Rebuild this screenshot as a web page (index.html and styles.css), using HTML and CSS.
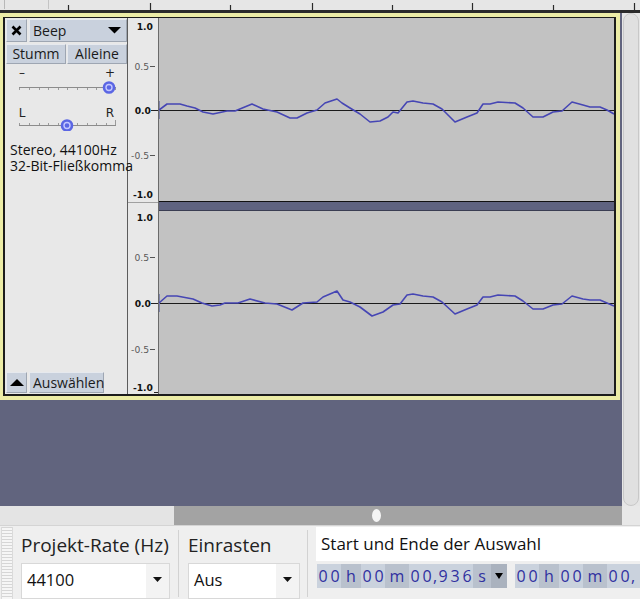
FILE: index.html
```html
<!DOCTYPE html>
<html>
<head>
<meta charset="utf-8">
<link rel="stylesheet" href="styles.css">
</head>
<body>
<div class="app">
  <div class="hruler">
    <svg width="640" height="10" viewBox="0 0 640 10">
      <line x1="4.5" y1="0" x2="4.5" y2="9" stroke="#b8b8b8"/>
      <line x1="48.5" y1="0" x2="48.5" y2="9" stroke="#c4c4c4"/>
      <g stroke="#2a2a2a" stroke-width="1.2">
        <line x1="68.5" y1="5" x2="68.5" y2="10"/>
        <line x1="150.5" y1="3" x2="150.5" y2="10"/>
        <line x1="230.5" y1="5" x2="230.5" y2="10"/>
        <line x1="312.5" y1="3" x2="312.5" y2="10"/>
        <line x1="392.5" y1="5" x2="392.5" y2="10"/>
        <line x1="472.5" y1="3" x2="472.5" y2="10"/>
        <line x1="553.5" y1="5" x2="553.5" y2="10"/>
        <line x1="634.5" y1="3" x2="634.5" y2="10"/>
      </g>
    </svg>
  </div>

  <div class="middle">
    <div class="canvas">
      <div class="track">
        <div class="track-inner">
          <div class="ctrl">
            <div class="row1">
              <div class="btn close">
                <svg width="19" height="21" viewBox="0 0 19 21"><path d="M5.5 6.5 L13.5 14.5 M13.5 6.5 L5.5 14.5" stroke="#000" stroke-width="2.6" fill="none"/></svg>
              </div>
              <div class="btn name"><span>Beep</span>
                <svg class="tri" width="14" height="7" viewBox="0 0 14 7"><path d="M0 0 H13 L6.5 6.5 Z" fill="#000"/></svg>
              </div>
            </div>
            <div class="row2">
              <div class="btn half">Stumm</div>
              <div class="btn half">Alleine</div>
            </div>
            <svg class="slider s1" width="122" height="32" viewBox="0 0 122 32">
              <text x="17" y="13" class="sl-lab">–</text>
              <text x="105" y="13" class="sl-lab">+</text>
              <line x1="14" y1="23.5" x2="111" y2="23.5" stroke="#8c8c8c"/>
              <g stroke="#9a9a9a">
                <line x1="14.5" y1="24" x2="14.5" y2="26"/><line x1="24.5" y1="24" x2="24.5" y2="26"/><line x1="34.5" y1="24" x2="34.5" y2="26"/><line x1="43.5" y1="24" x2="43.5" y2="26"/><line x1="53.5" y1="24" x2="53.5" y2="26"/><line x1="62.5" y1="24" x2="62.5" y2="26"/><line x1="72.5" y1="24" x2="72.5" y2="26"/><line x1="82.5" y1="24" x2="82.5" y2="26"/><line x1="91.5" y1="24" x2="91.5" y2="26"/><line x1="101.5" y1="24" x2="101.5" y2="26"/><line x1="110.5" y1="24" x2="110.5" y2="26"/>
              </g>
              <circle cx="104" cy="23.5" r="6.3" fill="#5b66e4"/>
              <circle cx="104" cy="23.5" r="3" fill="#5b66e4" stroke="#c4c8ff" stroke-width="1.4"/>
            </svg>
            <svg class="slider s2" width="122" height="35" viewBox="0 0 122 35">
              <text x="17" y="21" class="sl-lab">L</text>
              <text x="105" y="21" class="sl-lab">R</text>
              <line x1="14" y1="29.5" x2="111" y2="29.5" stroke="#8c8c8c"/>
              <g stroke="#9a9a9a">
                <line x1="14.5" y1="27" x2="14.5" y2="29"/><line x1="24.5" y1="27" x2="24.5" y2="29"/><line x1="34.5" y1="27" x2="34.5" y2="29"/><line x1="43.5" y1="27" x2="43.5" y2="29"/><line x1="53.5" y1="27" x2="53.5" y2="29"/><line x1="72.5" y1="27" x2="72.5" y2="29"/><line x1="82.5" y1="27" x2="82.5" y2="29"/><line x1="91.5" y1="27" x2="91.5" y2="29"/><line x1="101.5" y1="27" x2="101.5" y2="29"/><line x1="110.5" y1="24" x2="110.5" y2="29"/>
              </g>
              <circle cx="62" cy="29.5" r="6.3" fill="#5b66e4"/>
              <circle cx="62" cy="29.5" r="3" fill="#5b66e4" stroke="#c4c8ff" stroke-width="1.4"/>
            </svg>
            <div class="info">
              <div class="info-line">Stereo, 44100Hz</div>
              <div class="info-line">32-Bit-Fließkomma</div>
            </div>
            <div class="spacer"></div>
            <div class="row3">
              <div class="btn up">
                <svg width="14" height="7" viewBox="0 0 14 7"><path d="M0 7 H14 L7 0 Z" fill="#000"/></svg>
              </div>
              <div class="btn select">Auswählen</div>
            </div>
          </div>

          <div class="vruler">
            <svg width="30" height="183" viewBox="0 0 30 183">
              <text x="25" y="11.5" class="rb">1.0</text>
              <text x="21" y="51.5" class="rn">0.5</text>
              <line x1="22" y1="48.5" x2="27" y2="48.5" stroke="#555"/>
              <text x="23" y="95.5" class="rb">0.0</text>
              <line x1="23" y1="92.5" x2="30" y2="92.5" stroke="#222"/>
              <text x="21" y="140.5" class="rn">-0.5</text>
              <line x1="22" y1="137.5" x2="27" y2="137.5" stroke="#555"/>
              <text x="25" y="179.5" class="rb">-1.0</text>
            </svg>
            <div class="vr-sep"></div>
            <svg width="30" height="183" viewBox="0 0 30 183">
              <text x="25" y="9.5" class="rb">1.0</text>
              <text x="21" y="49.5" class="rn">0.5</text>
              <line x1="22" y1="46.5" x2="27" y2="46.5" stroke="#555"/>
              <text x="23" y="95.5" class="rb">0.0</text>
              <line x1="23" y1="92.5" x2="30" y2="92.5" stroke="#222"/>
              <text x="21" y="141.5" class="rn">-0.5</text>
              <line x1="22" y1="138.5" x2="27" y2="138.5" stroke="#555"/>
              <text x="25" y="179.5" class="rb">-1.0</text>
              <line x1="26" y1="181.5" x2="30" y2="181.5" stroke="#222"/>
            </svg>
          </div>

          <div class="wave">
            <svg width="455" height="183" viewBox="0 0 455 183">
              <line x1="0" y1="92.5" x2="455" y2="92.5" stroke="#1a1a1a"/>
              <line x1="0.5" y1="83" x2="0.5" y2="101" stroke="#7f84a8"/>
              <polyline fill="none" stroke="#4646b4" stroke-width="1.6" stroke-linejoin="round" points="0,92 8,86 21,86 28,88 36,90 44,94 54,96 68,93 76,93 93,86 104,91 118,94 131,100 138,100 148,95 158,92 166,85 178,81 183,85 191,90 201,96 211,104 221,103 229,99 234,94 239,95 248,84 254,83 264,85 274,86 283,91 296,104 308,99 318,95 324,86 331,86 339,84 356,85 364,90 374,99 384,99 394,94 403,93 413,84 424,87 431,89 441,89 448,92 455,96"/>
            </svg>
            <div class="wave-sep"></div>
            <svg width="455" height="183" viewBox="0 0 455 183">
              <line x1="0" y1="92.5" x2="455" y2="92.5" stroke="#1a1a1a"/>
              <line x1="0.5" y1="83" x2="0.5" y2="101" stroke="#7f84a8"/>
              <polyline fill="none" stroke="#4646b4" stroke-width="1.6" stroke-linejoin="round" points="0,92 8,85 18,85 34,88 43,92 53,95 61,94 66,92 79,92 91,88 106,92 118,93 133,99 144,92 158,91 164,86 178,80 184,89 191,91 201,96 213,105 224,101 234,94 241,93 248,84 254,83 264,85 274,86 283,91 296,103 308,98 318,94 324,86 331,86 339,84 356,85 364,90 374,98 384,98 394,94 403,93 413,85 424,88 431,89 441,89 448,92 455,95"/>
            </svg>
          </div>
        </div>
      </div>
    </div>
    <div class="vscroll"><div class="vthumb"></div></div>
  </div>

  <div class="hscroll">
    <div class="hs-left"></div>
    <div class="hs-thumb"><div class="oval"></div></div>
    <div class="hs-corner"></div>
  </div>

  <div class="toolbar">
    <div class="grip"></div>
    <div class="sec sec1">
      <div class="lab">Projekt-Rate (Hz)</div>
      <div class="combo"><span class="val">44100</span><span class="drop"><svg width="9" height="5" viewBox="0 0 9 5"><path d="M0 0 H9 L4.5 5 Z" fill="#111"/></svg></span></div>
    </div>
    <div class="sep"></div>
    <div class="sec sec2">
      <div class="lab">Einrasten</div>
      <div class="combo"><span class="val">Aus</span><span class="drop"><svg width="9" height="5" viewBox="0 0 9 5"><path d="M0 0 H9 L4.5 5 Z" fill="#111"/></svg></span></div>
    </div>
    <div class="sep"></div>
    <div class="sec sec3">
      <div class="selbox">Start und Ende der Auswahl</div>
      <div class="times">
        <div class="time">
          <span class="d">0</span><span class="d">0</span><span class="u uh">h</span><span class="d">0</span><span class="d">0</span><span class="u um">m</span><span class="d">0</span><span class="d">0</span><span class="u uc">,</span><span class="d">9</span><span class="d">3</span><span class="d">6</span><span class="u us">s</span><span class="arr"><svg width="8" height="6" viewBox="0 0 8 6"><path d="M0 0 H8 L4 6 Z" fill="#000"/></svg></span>
        </div>
        <div class="time time2">
          <span class="d">0</span><span class="d">0</span><span class="u uh">h</span><span class="d">0</span><span class="d">0</span><span class="u um">m</span><span class="d">0</span><span class="d">0</span><span class="u uc">,</span><span class="d"></span>
        </div>
      </div>
    </div>
  </div>
</div>
</body>
</html>
```

FILE: styles.css
```css
* { box-sizing: border-box; }

body {
  margin: 0;
  width: 640px;
  height: 599px;
  overflow: hidden;
  font-family: "Open Sans", "Noto Sans", sans-serif;
  background: #efefef;
  color: #1a1a1a;
}

svg { display: block; }

.app {
  display: flex;
  flex-direction: column;
  width: 640px;
  height: 599px;
}

.hruler {
  height: 13px;
  flex: none;
  background: #e6e6e6;
  border-bottom: 3px solid #2b2b2b;
}

.middle {
  display: flex;
  height: 493px;
  flex: none;
}

.canvas {
  width: 622px;
  background: #61647e;
}

.track {
  width: 620px;
  border: 4px solid #ececa6;
  border-left-width: 3px;
}

.track-inner {
  display: flex;
  height: 379px;
  border: 2px solid #1c1c1c;
  border-top-width: 1px;
}

.ctrl {
  width: 123px;
  flex: none;
  background: #e8e8e8;
  border-right: 1px solid #5c5c5c;
  display: flex;
  flex-direction: column;
  font-size: 14px;
}

.btn {
  background: #c9d1dd;
  border: 1px solid;
  border-color: #e6e9ee #9ea6b2 #9ea6b2 #e6e9ee;
  display: flex;
  align-items: center;
  line-height: 18px;
  white-space: nowrap;
}

.row1 {
  display: flex;
  gap: 2px;
  padding: 1px 0 0 1px;
  height: 24px;
}
.row1 .btn { height: 23px; }
.close { width: 21px; justify-content: center; }
.name { flex: 1; padding-left: 3px; justify-content: space-between; padding-right: 4px; }

.row2 {
  display: flex;
  gap: 1px;
  padding-left: 1px;
  margin-top: 2px;
  height: 20px;
}
.half { width: 60px; height: 20px; justify-content: center; }

.slider { flex: none; }
.sl-lab {
  font-family: "DejaVu Sans", sans-serif;
  font-size: 12px;
  text-anchor: middle;
  fill: #222;
}

.info {
  position: relative;
  z-index: 1;
  margin-top: 11px;
  padding-left: 5px;
  white-space: nowrap;
  color: #111;
}
.info-line {
  height: 16px;
  line-height: 16px;
}

.spacer { flex: 1; }

.row3 {
  display: flex;
  gap: 2px;
  padding-left: 1px;
  margin-bottom: 1px;
  height: 21px;
}
.row3 .btn { height: 21px; }
.up { width: 21px; justify-content: center; }
.select { width: 75px; padding-left: 3px; }

.vruler {
  width: 31px;
  flex: none;
  background: #e8e8e8;
  border-right: 1px solid #6a6a6a;
  display: flex;
  flex-direction: column;
}
.rb, .rn {
  font-family: "DejaVu Sans", sans-serif;
  font-size: 9.2px;
  text-anchor: end;
}
.rb { font-weight: bold; fill: #111; }
.rn { fill: #5a5a5a; }

.vr-sep {
  margin-top: 1px;
  border-top: 1px solid #a0a0a0;
  height: 9px;
}

.wave {
  flex: 1;
  background: #c2c2c2;
  display: flex;
  flex-direction: column;
}
.wave-sep {
  height: 10px;
  background: #5f6380;
  border-top: 1px solid #111;
  border-bottom: 1px solid #3a3d52;
}

.vscroll {
  width: 18px;
  background: #e6e6e6;
  padding: 0 1px;
}
.vthumb {
  height: 100%;
  border: 1px solid #c8c8c8;
  border-radius: 8px;
  background: #e0e0e0;
}

.hscroll {
  display: flex;
  height: 19px;
  flex: none;
}
.hs-left { width: 174px; background: #e4e4e4; }
.hs-thumb {
  width: 448px;
  background: #a3a3a3;
  display: flex;
  align-items: center;
  padding-left: 198px;
}
.oval {
  width: 9px;
  height: 13px;
  border-radius: 50%;
  background: #f4f4f4;
}
.hs-corner { flex: 1; background: #e8e8e8; }

.toolbar {
  flex: 1;
  display: flex;
  background: #efefef;
  border-top: 1px solid #d4d4d4;
  overflow: hidden;
}

.grip {
  width: 12px;
  margin-left: 1px;
  margin-top: 1px;
  border-left: 1px solid #dadada;
  border-right: 1px solid #dadada;
  background: repeating-linear-gradient(to bottom, #d6d6d6 0 1px, #f6f6f6 1px 3px);
}

.sec { display: flex; flex-direction: column; }
.sec1 { width: 149px; margin-left: 8px; }
.sec2 { width: 112px; }

.lab {
  margin-top: 6px;
  height: 26px;
  line-height: 26px;
  font-size: 19px;
  color: #222;
  white-space: nowrap;
}

.combo {
  margin-top: 5px;
  height: 36px;
  background: #fff;
  border: 1px solid #d8d8d8;
  display: flex;
  align-items: center;
}
.val {
  flex: 1;
  padding-left: 5px;
  font-size: 16.5px;
  color: #111;
  padding-bottom: 3px;
}
.drop {
  width: 23px;
  align-self: stretch;
  background: #f3f3f3;
  display: flex;
  align-items: center;
  justify-content: center;
  padding-bottom: 3px;
}

.sep {
  width: 1px;
  margin: 4px 8px 2px;
  background: #d2d2d2;
}
.sec1 + .sep { margin-left: 8px; margin-right: 9px; }
.sec2 + .sep { margin-left: 7px; margin-right: 8px; }

.sec3 { flex: 1; min-width: 0; }

.selbox {
  margin-top: 1px;
  height: 34px;
  background: #fff;
  font-size: 17px;
  line-height: 34px;
  padding-left: 5px;
  white-space: nowrap;
  color: #111;
}

.times {
  display: flex;
  gap: 8px;
  margin-top: 3px;
  margin-left: 1px;
}

.time {
  display: flex;
  height: 24px;
  background: #b9c1cd;
  font-size: 16px;
  color: #3030a0;
  line-height: 24px;
  flex: none;
}
.time span { display: flex; justify-content: center; }
.d { width: 12px; background: #cad2dd; }
.uh { width: 20px; }
.um { width: 24px; }
.uc { width: 4px; background: #cad2dd; }
.us { width: 18px; }
.arr {
  width: 16px;
  align-items: center;
  background: #aab2be;
}
```
